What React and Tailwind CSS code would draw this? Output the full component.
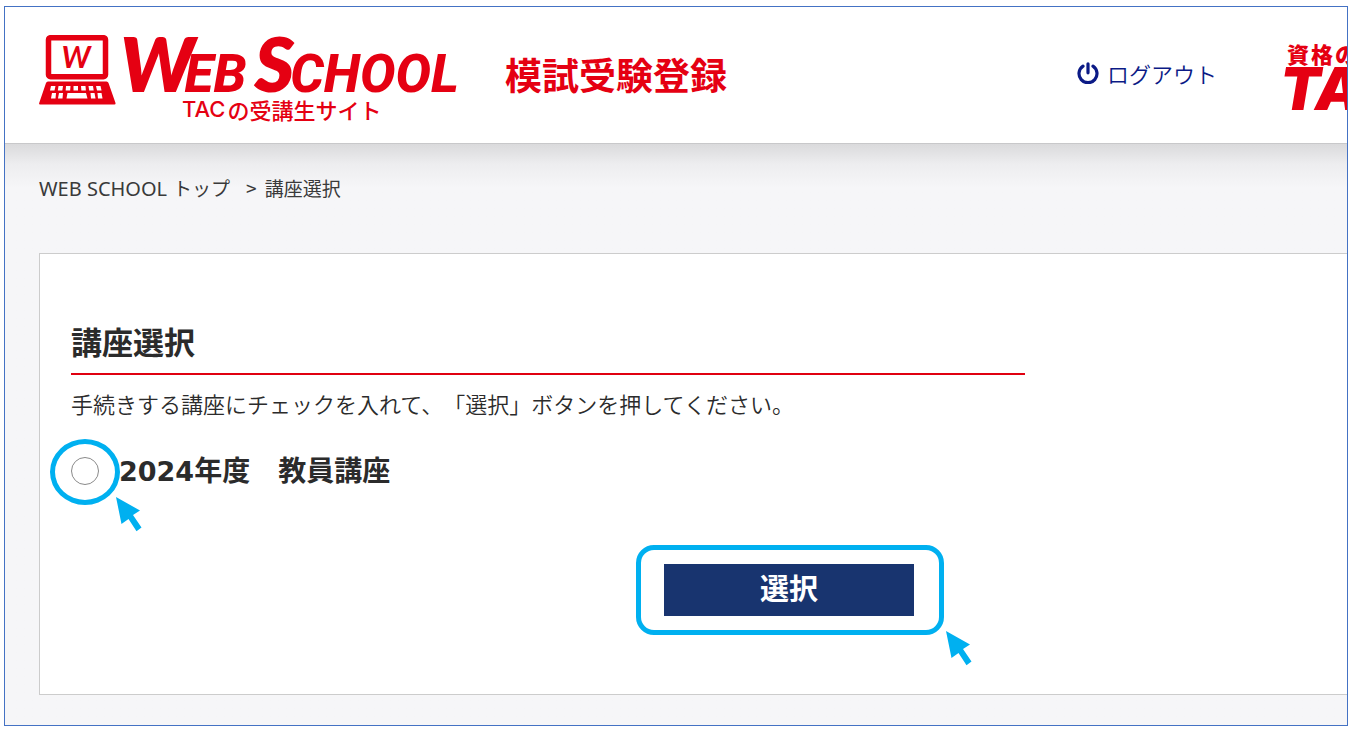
function LaptopIcon() {
  return (
    <svg className="block h-[70px] w-[77px] shrink-0" viewBox="0 0 77 70" aria-hidden="true">
      <rect x="9.500" y="2.700" width="57" height="39" rx="2" fill="none" stroke="#e50012" strokeWidth="5.500" />
      <text x="37" y="33" textAnchor="middle" fontSize="30" fontWeight="700" fontStyle="italic" fill="#e50012" fontFamily="Lato, sans-serif">W</text>
      <path d="M9 46.500h58.500q1.500 0 2 1.500L76.500 68q.3 1.500-1 1.500H1Q-.3 69.500.2 68L7 48q.5-1.500 2-1.500z" fill="#e50012" />
      <g fill="#fff">
        {[12, 19.500, 27, 34.500, 42, 49.500, 57].map((x, i) => (
          <path key={x} d={`M${x} 51h4.500l${-1 + i * 0.34} 4.500h-4.500z`} />
        ))}
        {[13, 20, 51.500, 58.500].map((x, i) => (
          <path key={x} d={`M${x} 58h4l${i < 2 ? -0.5 : 1} 5.500h-4.500z`} />
        ))}
        <path d="M28.500 58h18.500l1.500 5.500h-21z" />
      </g>
    </svg>
  );
}

function PowerIcon() {
  return (
    <svg className="block h-[22px] w-[22px] shrink-0" viewBox="0 0 22 22" fill="none" stroke="#0b1a86" strokeWidth="3.200" strokeLinecap="round" aria-hidden="true">
      <path d="M6 4.200a9 9 0 1 0 10 0M11 1.800v9" />
    </svg>
  );
}

function Pointer({ className }) {
  return (
    <svg className={`absolute h-[35px] w-[26px] ${className}`} viewBox="0 0 26 35" fill="#00b0f0" aria-hidden="true">
      <path d="M0 0l24 13.500-7 4.500 8.500 12.500-5 3.800-8-12.300-7 5z" />
    </svg>
  );
}

export default function App() {
  return (
    <div className="flex min-h-screen flex-col bg-white pt-1.5 pr-0.5 pb-1 pl-1 font-['Noto_Sans_CJK_JP',sans-serif] text-[#2b2b2b]">
      <div className="flex flex-1 flex-col overflow-hidden border border-[#4472c4] bg-[#f6f6f8] whitespace-nowrap">
        <header className="flex h-[137px] items-start border-b border-[#c8c8ca] bg-white pl-[34px]">
          <a href="#top" className="flex w-[420px] shrink-0 pt-7 text-[#e50012]">
            <LaptopIcon />
            <span className="flex flex-col pl-1">
              <span className="flex h-[62px] items-baseline font-['Roboto',sans-serif] leading-[56px] font-extrabold italic">
                <span className="font-['Lato',sans-serif] text-[76px]">W</span>
                <span className="-ml-2.5 text-[53px]">EB</span>
                <span className="pl-2 font-['Lato',sans-serif] text-[76px]">S</span>
                <span className="-ml-1 text-[53px]">CHOOL</span>
              </span>
              <span className="flex gap-0.5 pl-[62px] text-[22px] leading-6 font-medium">
                <span className="font-['Inter',sans-serif]">TAC</span>
                <span>の受講生サイト</span>
              </span>
            </span>
          </a>
          <h1 className="shrink-0 pt-[41px] pl-[46px] text-[37px] leading-[52px] font-bold text-[#e50012]">模試受験登録</h1>
          <a href="#logout" className="ml-[350px] flex shrink-0 items-center gap-2 pt-[50px] text-[22px] leading-8 font-[350] text-[#0b1a86]">
            <PowerIcon />
            ログアウト
          </a>
          <a href="#tac" className="ml-[63px] flex shrink-0 flex-col pt-[34px] text-[#e50012]">
            <span className="flex gap-0.5 pl-[7px] text-[22px] leading-[24px] font-black">
              <span>資</span><span>格</span><span>の</span>
            </span>
            <span className="font-['Inter','Liberation_Sans',sans-serif] text-[59px] leading-[48px] font-black italic">TAC</span>
          </a>
        </header>
        <main className="flex flex-1 flex-col bg-linear-to-b from-[#dadadc] via-[#ededef] via-[20px] to-[#f6f6f8] to-[44px] pb-[30px] pl-[34px]">
          <nav aria-label="パンくずリスト" className="flex h-[109px] items-baseline pt-[29px] text-[19px] leading-[30px] text-[#3a3a3a]">
            <a href="#top" className="flex items-baseline gap-1.5">
              <span className="font-['Noto_Sans',sans-serif] text-[20px]">WEB SCHOOL</span>
              <span>トップ</span>
            </a>
            <span className="px-2 pl-4">&gt;</span>
            <span>講座選択</span>
          </nav>
          <section className="flex-1 border border-r-0 border-[#cccccc] bg-white pl-[31px]">
            <h2 className="mt-[65px] w-[954px] max-w-full border-b-2 border-[#e00010] pb-2.5 text-[31px] leading-[44px] font-bold">講座選択</h2>
            <p className="mt-[12px] text-[22px] leading-8 font-[350] [text-spacing-trim:space-all]">手続きする講座にチェックを入れて、「選択」ボタンを押してください。</p>
            <form>
              <div className="relative mt-8 flex w-fit items-center">
                <input id="course" type="radio" name="course" className="m-0 h-[28px] w-[28px]  appearance-none rounded-full border border-[#8a8a8a] bg-white checked:border-8" />
                <label htmlFor="course" className="pl-5 text-[28px] leading-9 font-bold">
                  <span className="font-['DejaVu_Sans',sans-serif] text-[27px]">2024</span>年度　教員講座
                </label>
                <div className="pointer-events-none absolute -top-3 -left-[21px] h-[66px] w-[70px] rounded-[50%] border-[5px] border-[#00b0f0]" />
                <Pointer className="top-[46px] left-[45px]" />
              </div>
              <div className="relative mt-[55px] ml-[565px] w-fit rounded-[18px] border-[5px] border-[#00b0f0] py-[14px] pr-[25px] pl-[23px]">
                <button type="button" className="block h-[52px] w-[250px] bg-[#18346f] pb-1.5 text-[29px] leading-[46px] font-bold text-white">選択</button>
                <Pointer className="-right-[33px] -bottom-[36px]" />
              </div>
            </form>
          </section>
        </main>
      </div>
    </div>
  );
}
